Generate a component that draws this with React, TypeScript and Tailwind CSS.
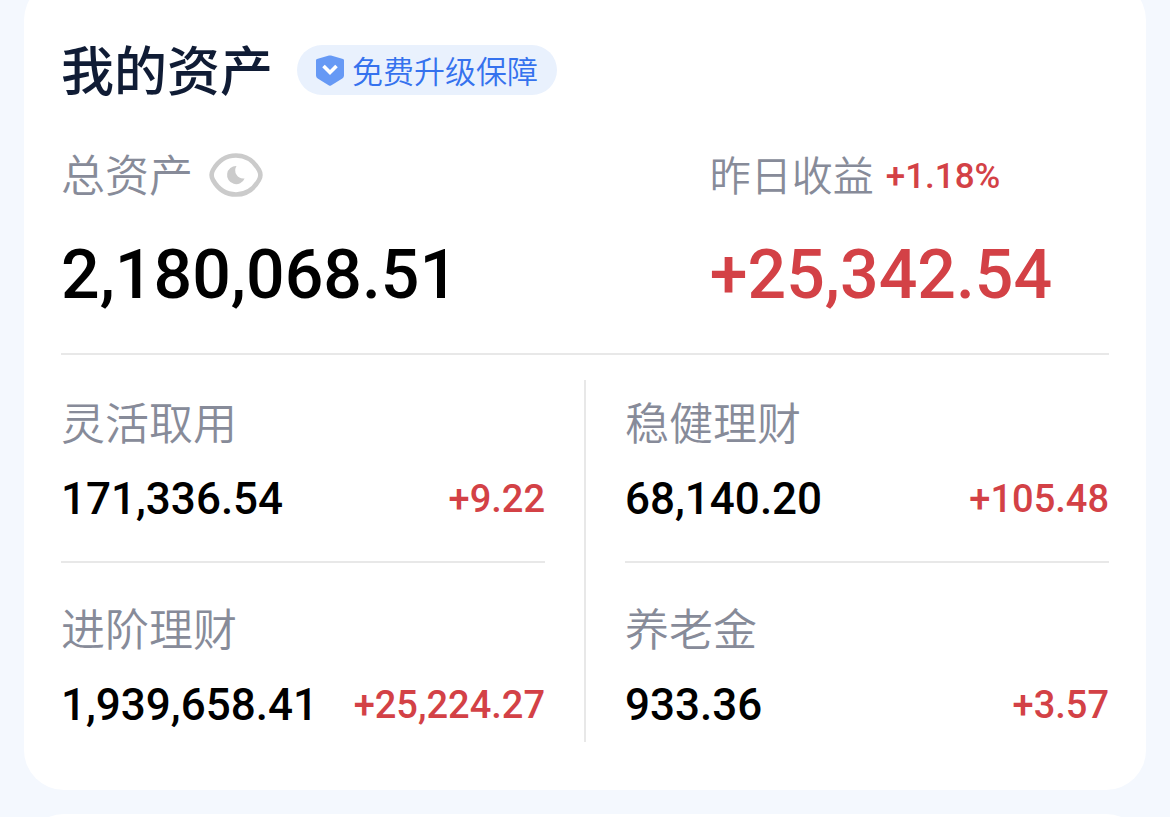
type Holding = { name: string; amount: string; change: string };

const columns: Holding[][] = [
  [
    { name: "灵活取用", amount: "171,336.54", change: "+9.22" },
    { name: "进阶理财", amount: "1,939,658.41", change: "+25,224.27" },
  ],
  [
    { name: "稳健理财", amount: "68,140.20", change: "+105.48" },
    { name: "养老金", amount: "933.36", change: "+3.57" },
  ],
];

function ShieldIcon() {
  return (
    <svg width="28" height="31" viewBox="0 0 28 31" aria-hidden="true">
      <path
        d="M13 0.6 Q14 0.2 15 0.6 L27 3.9 Q28 4.2 28 5.2 V20.500 Q28 22.500 26.300 23.600 L15 30.400 Q14 31 13 30.400 L1.700 23.600 Q0 22.500 0 20.500 V5.200 Q0 4.200 1 3.900 Z"
        fill="#6699f5"
      />
      <path d="M7.500 11 L14 17.500 L20.500 11" fill="none" stroke="#fff" strokeWidth="3.600" />
    </svg>
  );
}

function EyeIcon() {
  return (
    <svg width="54" height="44" viewBox="0 0 54 44" aria-hidden="true">
      <path
        d="M27 2.5 C38 2.5 45.5 9 50 17 Q52.8 22 50 27 C45.5 35 38 41.5 27 41.5 C16 41.5 8.500 35 4 27 Q1.200 22 4 17 C8.500 9 16 2.500 27 2.500 Z"
        fill="none"
        stroke="#cbcbcb"
        strokeWidth="4.600"
      />
      <path
        d="M27.500 13 A9.100 9.100 0 1 0 35.600 25.500 A8.200 8.200 0 0 1 27.500 13 Z"
        fill="#cbcbcb"
      />
    </svg>
  );
}

function HoldingRow({ item }: { item: Holding }) {
  return (
    <>
      <h3 className="text-[44px] leading-[48px] font-[350] text-[#878b99]">{item.name}</h3>
      <div className="mt-7 flex items-center justify-between whitespace-nowrap font-[Roboto,sans-serif] font-medium">
        <span className="text-[44px] leading-[52px] text-black">{item.amount}</span>
        <span className="text-[38px] leading-[52px] text-[#d34146]">{item.change}</span>
      </div>
    </>
  );
}

export default function App() {
  return (
    <main className="h-dvh overflow-hidden bg-[#f4f8fe] px-6 font-['Noto_Sans_CJK_SC',sans-serif]">
      <section className="-mt-5 rounded-[40px] bg-white px-[37px] pt-16 pb-12">
        {/* title */}
        <div className="flex h-[52px] items-start gap-6">
          <h1 className="text-[53px] leading-[48px] font-medium text-[#101c35]">我的资产</h1>
          <button className="flex h-[52px] items-center">
            <span className="flex items-center gap-2 rounded-full bg-[#e9f1fd] px-[19px] text-[31px] leading-[50px] font-[350] text-[#3572ee]">
              <ShieldIcon />
              免费升级保障
            </span>
          </button>
        </div>

        {/* totals */}
        <div className="mt-[53px] grid grid-cols-[13fr_8fr]">
          <div>
            <div className="flex h-[52px] items-start gap-4">
              <h2 className="text-[44px] leading-[48px] font-[350] text-[#878b99]">总资产</h2>
              <button className="self-center" aria-label="隐藏金额">
                <EyeIcon />
              </button>
            </div>
            <p className="mt-[38px] font-[Roboto,sans-serif] text-[68px] leading-[72px] font-medium text-black">2,180,068.51</p>
          </div>
          <div className="whitespace-nowrap text-[#d34146]">
            <div className="flex h-[52px] items-start gap-3">
              <h2 className="text-[41px] leading-[48px] font-[350] text-[#878b99]">昨日收益</h2>
              <span className="self-end font-[Roboto,sans-serif] text-[35px] leading-[48px] font-medium">+1.18%</span>
            </div>
            <p className="mt-[38px] font-[Roboto,sans-serif] text-[68px] leading-[72px] font-medium">+25,342.54</p>
          </div>
        </div>

        {/* holdings */}
        <div className="mt-[42px] grid grid-cols-[1fr_2px_1fr] gap-x-[39px] border-t-2 border-[#e8e8e8] pt-[25px]">
          {columns.map((col, i) => (
            <div key={col[0].name} className="contents">
              {i > 0 && <div className="bg-[#e8e8e8]" />}
              <div className="pt-[17px]">
                <div className="border-b-2 border-[#e8e8e8] pb-9">
                  <HoldingRow item={col[0]} />
                </div>
                <div className="pt-10 pb-[11px]">
                  <HoldingRow item={col[1]} />
                </div>
              </div>
            </div>
          ))}
        </div>
      </section>

      {/* next card */}
      <section className="mt-6 h-24 rounded-[40px] bg-white" />
    </main>
  );
}
